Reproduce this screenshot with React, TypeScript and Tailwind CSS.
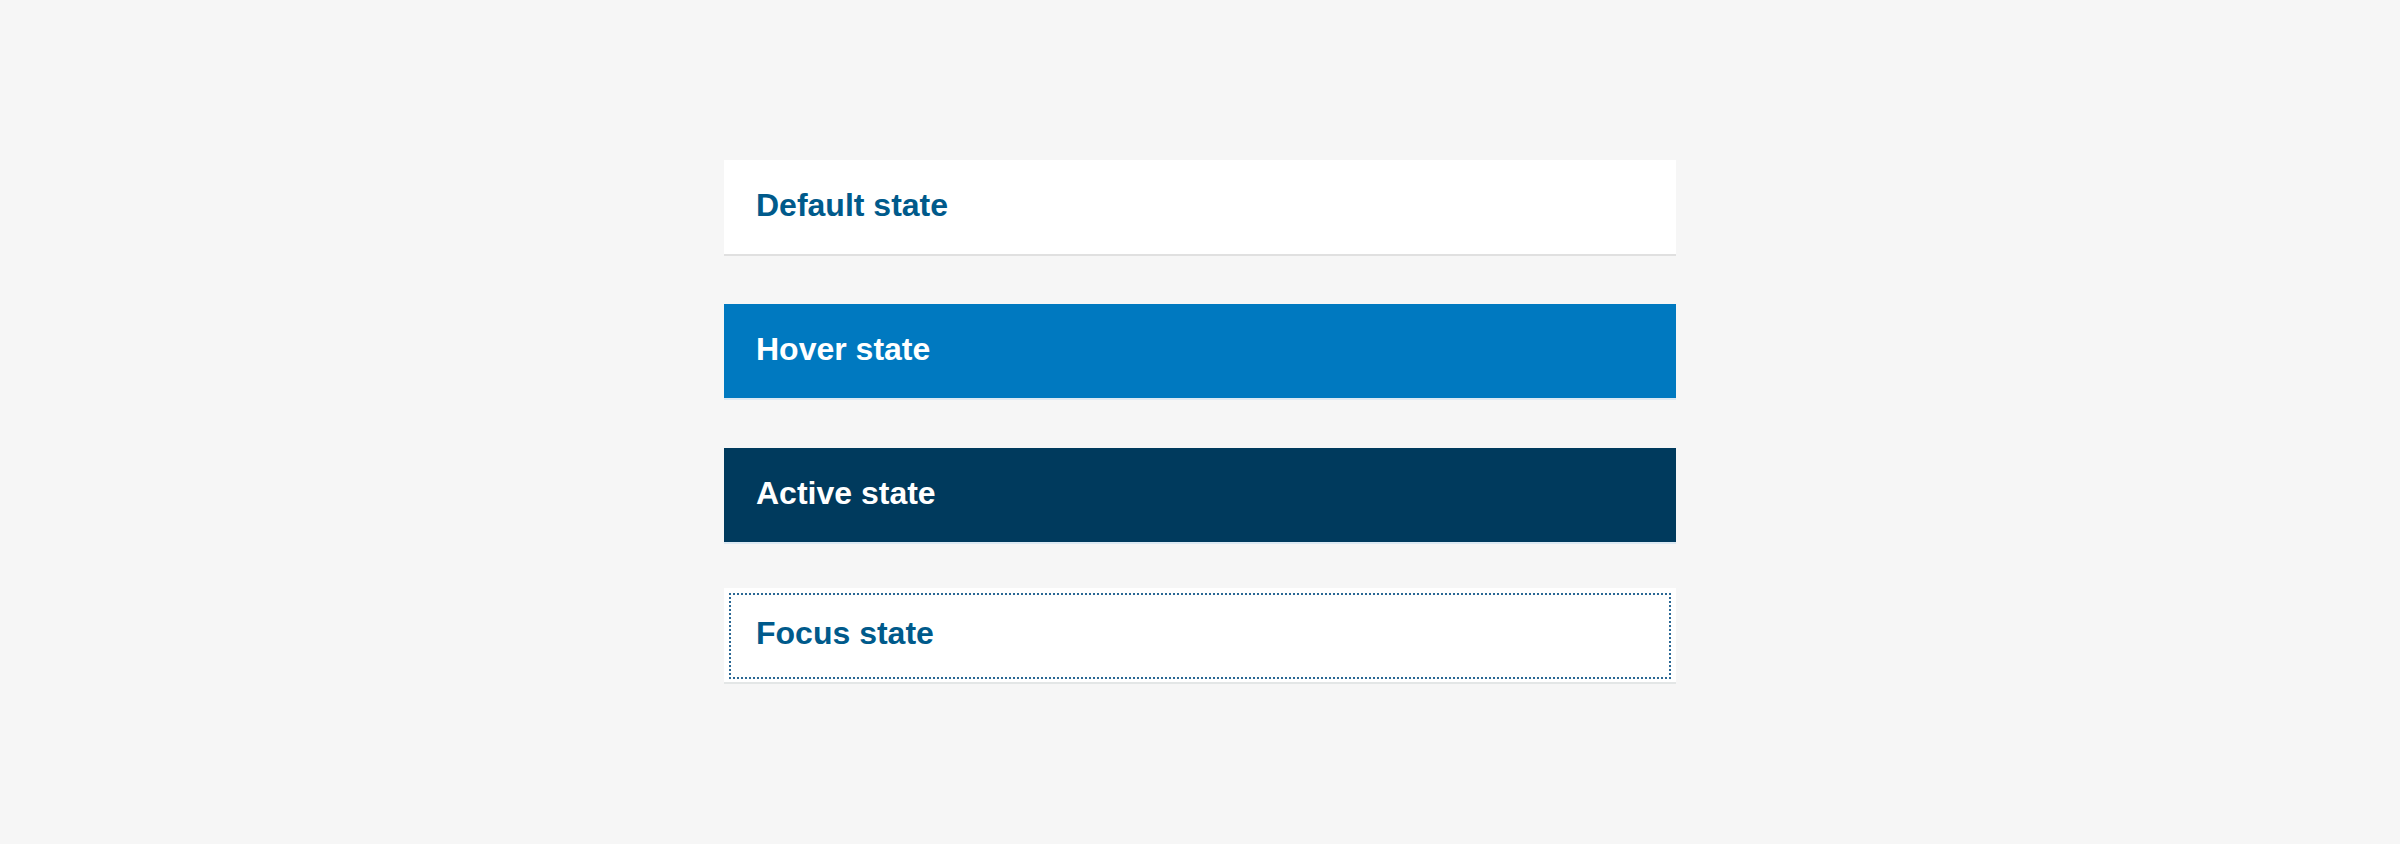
import React from "react";

export default function App() {
  const font = { fontFamily: '"Liberation Sans", Arial, Helvetica, sans-serif' };
  return (
    <div className="min-h-[844px] w-full bg-[#f6f6f6] pt-[160px]" style={font}>
      <div className="mx-auto flex w-[952px] flex-col">
        <div className="h-[94px] bg-white px-[32px] pt-[29px] text-[32px] font-bold leading-none text-[#005a8b] shadow-[0_2px_0_#e0e0e0]">
          Default state
        </div>
        <div className="mt-[50px] h-[94px] bg-[#0079c0] px-[32px] pt-[29px] text-[32px] font-bold leading-none text-white shadow-[0_2px_0_#dce9f3]">
          Hover state
        </div>
        <div className="mt-[50px] h-[94px] bg-[#003a5d] px-[32px] pt-[29px] text-[32px] font-bold leading-none text-white shadow-[0_2px_0_#dce9f3]">
          Active state
        </div>
        <div className="relative mt-[46px] h-[94px] bg-white px-[32px] pt-[29px] text-[32px] font-bold leading-none text-[#005a8b] shadow-[0_2px_0_#e3e6e6]">
          <div className="pointer-events-none absolute bottom-[3px] left-[5px] right-[5px] top-[5px] border-2 border-dotted border-[#2a6794]" />
          <span className="relative">Focus state</span>
        </div>
      </div>
    </div>
  );
}
